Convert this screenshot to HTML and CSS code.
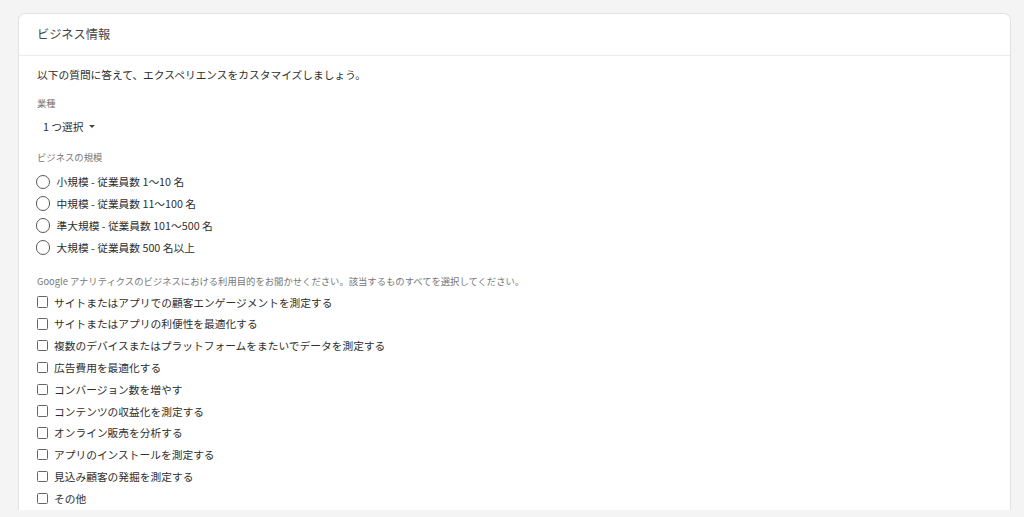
FILE: index.html
```html
<!DOCTYPE html>
<html lang="ja">
<head>
<meta charset="utf-8">
<title>ビジネス情報</title>
<link rel="stylesheet" href="styles.css">
</head>
<body>
<div class="page">
  <section class="card">
    <header class="card-head">ビジネス情報</header>
    <div class="card-body">
      <p class="intro">以下の質問に答えて、エクスペリエンスをカスタマイズしましょう。</p>

      <div class="field-label label-industry">業種</div>
      <div class="select">1 つ選択<span class="caret"></span></div>

      <div class="field-label label-size">ビジネスの規模</div>
      <ul class="options radios">
        <li class="opt"><span class="radio"></span><span class="txt">小規模 - 従業員数 1〜10 名</span></li>
        <li class="opt"><span class="radio"></span><span class="txt">中規模 - 従業員数 11〜100 名</span></li>
        <li class="opt"><span class="radio"></span><span class="txt">準大規模 - 従業員数 101〜500 名</span></li>
        <li class="opt"><span class="radio"></span><span class="txt">大規模 - 従業員数 500 名以上</span></li>
      </ul>

      <div class="field-label label-purpose">Google アナリティクスのビジネスにおける利用目的をお聞かせください。該当するものすべてを選択してください。</div>
      <ul class="options checks">
        <li class="opt"><span class="check"></span><span class="txt">サイトまたはアプリでの顧客エンゲージメントを測定する</span></li>
        <li class="opt"><span class="check"></span><span class="txt">サイトまたはアプリの利便性を最適化する</span></li>
        <li class="opt"><span class="check"></span><span class="txt">複数のデバイスまたはプラットフォームをまたいでデータを測定する</span></li>
        <li class="opt"><span class="check"></span><span class="txt">広告費用を最適化する</span></li>
        <li class="opt"><span class="check"></span><span class="txt">コンバージョン数を増やす</span></li>
        <li class="opt"><span class="check"></span><span class="txt">コンテンツの収益化を測定する</span></li>
        <li class="opt"><span class="check"></span><span class="txt">オンライン販売を分析する</span></li>
        <li class="opt"><span class="check"></span><span class="txt">アプリのインストールを測定する</span></li>
        <li class="opt"><span class="check"></span><span class="txt">見込み顧客の発掘を測定する</span></li>
        <li class="opt"><span class="check"></span><span class="txt">その他</span></li>
      </ul>
    </div>
  </section>
</div>
</body>
</html>
```

FILE: styles.css
```css
html, body {
  margin: 0;
  padding: 0;
  background: #f4f4f4;
  font-family: "Noto Sans CJK JP", "Noto Sans", sans-serif;
  color: #333;
}

.page {
  height: 517px;
  box-sizing: border-box;
  padding: 13px 13px 7px 18px;
  overflow: hidden;
}

.card {
  height: 100%;
  box-sizing: border-box;
  background: #fff;
  border: 1px solid #e2e2e2;
  border-bottom: none;
  border-radius: 7px 7px 0 0;
  overflow: hidden;
}

.card-head {
  height: 41px;
  line-height: 41px;
  padding-left: 18px;
  font-size: 12.2px;
  color: #454545;
  border-bottom: 1px solid #ececec;
}

.card-body {
  padding: 11px 18px 0 18px;
}

.intro {
  margin: 0;
  font-size: 10.72px;
  line-height: 16px;
  color: #2e2e2e;
}

.field-label {
  font-size: 9.33px;
  line-height: 14px;
  color: #777;
}

.label-industry { margin-top: 13px; }

.select {
  display: flex;
  align-items: center;
  margin-top: 6px;
  padding-left: 6px;
  height: 20px;
  font-size: 10.72px;
  color: #2e2e2e;
}

.caret {
  margin-left: 5px;
  width: 0;
  height: 0;
  border-left: 3px solid transparent;
  border-right: 3px solid transparent;
  border-top: 3px solid #444;
}

.label-size { margin-top: 14px; }

.options {
  list-style: none;
  margin: 0;
  padding: 0;
}

.radios { margin-top: 7px; }

.opt {
  display: flex;
  align-items: center;
  height: 21.8px;
  font-size: 10.72px;
  color: #2e2e2e;
}

.radio {
  width: 12.5px;
  height: 12.5px;
  border: 1.7px solid #5a5a5a;
  border-radius: 50%;
  margin-right: 6.5px;
  margin-left: -1.5px;
  flex: none;
}

.label-purpose { margin-top: 15.5px; }

.checks { margin-top: 3.5px; }

.check {
  width: 9.5px;
  height: 9.5px;
  border: 1.6px solid #666;
  border-radius: 1.5px;
  margin-right: 6px;
  margin-left: -0.5px;
  flex: none;
}
```
